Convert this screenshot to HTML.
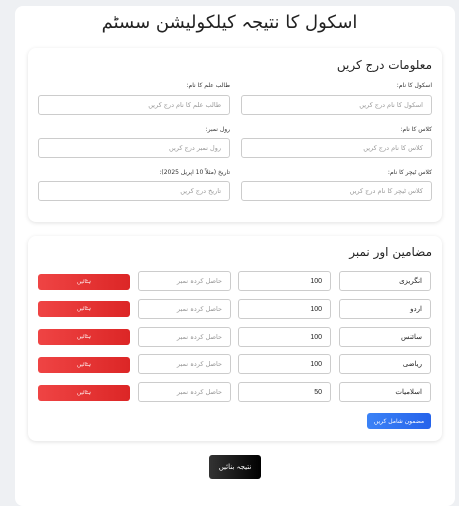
<!DOCTYPE html>
<html><head><meta charset="utf-8"><style>
*{box-sizing:border-box;margin:0;padding:0}
body{width:459px;height:494px;background:#eef0f3;font-family:"DejaVu Sans",sans-serif;direction:rtl;overflow:hidden;position:relative}
.outer{position:absolute;left:15px;top:6px;width:440px;height:500px;background:#fff;border-radius:8px}
h1{position:absolute;left:0;right:0;top:12px;text-align:center;font-size:18px;color:#222;font-weight:normal}
.card{position:absolute;left:28px;width:414px;background:#fff;border-radius:8px;box-shadow:0 1px 4px rgba(0,0,0,.12)}
.ab{position:absolute}
h2{position:absolute;right:10px;font-size:12px;color:#222;font-weight:normal}
.lbl{position:absolute;font-size:6px;color:#333}
.in{position:absolute;border:1px solid #ccc;border-radius:3px;height:20px;background:#fff;font-size:6.5px;color:#999;padding-right:8px;display:flex;align-items:center;justify-content:flex-start}
.v{color:#222;font-family:"Liberation Sans",sans-serif;font-size:7px}
.del{position:absolute;left:10px;width:92px;height:16px;border-radius:3px;background:linear-gradient(90deg,#ef4444,#dc2626);color:#fff;font-size:5.5px;display:flex;align-items:center;justify-content:center}
</style></head><body>
<div class="outer"></div>
<h1>اسکول کا نتیجہ کیلکولیشن سسٹم</h1>
<div class="card" style="top:48px;height:174px">
<h2 style="top:10px">معلومات درج کریں</h2>
<div class="lbl" style="right:10px;top:34px">اسکول کا نام:</div>
<div class="lbl" style="right:212px;top:34px">طالب علم کا نام:</div>
<div class="in" style="right:10px;top:47px;width:191px">اسکول کا نام درج کریں</div>
<div class="in" style="right:212px;top:47px;width:192px">طالب علم کا نام درج کریں</div>
<div class="lbl" style="right:10px;top:78px">کلاس کا نام:</div>
<div class="lbl" style="right:212px;top:78px">رول نمبر:</div>
<div class="in" style="right:10px;top:90px;width:191px">کلاس کا نام درج کریں</div>
<div class="in" style="right:212px;top:90px;width:192px">رول نمبر درج کریں</div>
<div class="lbl" style="right:10px;top:121px">کلاس ٹیچر کا نام:</div>
<div class="lbl" style="right:212px;top:121px">تاریخ (مثلاً 10 اپریل 2025):</div>
<div class="in" style="right:10px;top:133px;width:191px">کلاس ٹیچر کا نام درج کریں</div>
<div class="in" style="right:212px;top:133px;width:192px">تاریخ درج کریں</div>
</div>
<div class="card" style="top:236px;height:205px">
<h2 style="top:9px">مضامین اور نمبر</h2>
<div class="in v" style="right:11px;top:35px;width:92px">انگریزی</div><div class="in v" style="right:111px;top:35px;width:93px">100</div><div class="in" style="right:211px;top:35px;width:93px">حاصل کردہ نمبر</div><div class="del" style="top:38px">ہٹائیں</div>
<div class="in v" style="right:11px;top:63px;width:92px">اردو</div><div class="in v" style="right:111px;top:63px;width:93px">100</div><div class="in" style="right:211px;top:63px;width:93px">حاصل کردہ نمبر</div><div class="del" style="top:65px">ہٹائیں</div>
<div class="in v" style="right:11px;top:91px;width:92px">سائنس</div><div class="in v" style="right:111px;top:91px;width:93px">100</div><div class="in" style="right:211px;top:91px;width:93px">حاصل کردہ نمبر</div><div class="del" style="top:93px">ہٹائیں</div>
<div class="in v" style="right:11px;top:118px;width:92px">ریاضی</div><div class="in v" style="right:111px;top:118px;width:93px">100</div><div class="in" style="right:211px;top:118px;width:93px">حاصل کردہ نمبر</div><div class="del" style="top:121px">ہٹائیں</div>
<div class="in v" style="right:11px;top:146px;width:92px">اسلامیات</div><div class="in v" style="right:111px;top:146px;width:93px">50</div><div class="in" style="right:211px;top:146px;width:93px">حاصل کردہ نمبر</div><div class="del" style="top:149px">ہٹائیں</div>
<div class="ab" style="right:11px;top:177px;width:64px;height:16px;border-radius:3px;background:linear-gradient(90deg,#3b82f6,#2563eb);color:#fff;font-size:6px;display:flex;align-items:center;justify-content:center">مضمون شامل کریں</div>
</div>
<div class="ab" style="left:209px;top:455px;width:52px;height:24px;border-radius:3px;background:linear-gradient(90deg,#333,#000);color:#fff;font-size:7px;display:flex;align-items:center;justify-content:center">نتیجہ بنائیں</div>
</body></html>
